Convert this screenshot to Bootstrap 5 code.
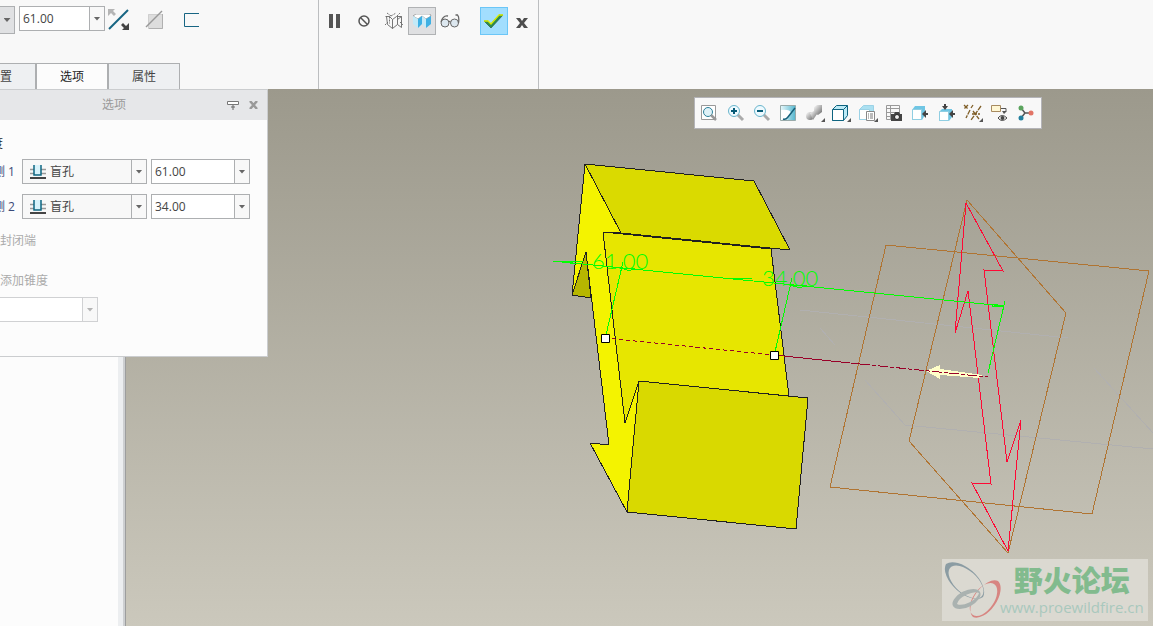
<!DOCTYPE html>
<html lang="zh-CN">
<head>
<meta charset="utf-8">
<meta name="viewport" content="width=device-width, initial-scale=1">
<title>拉伸 - 选项</title>
<link rel="stylesheet" href="https://cdn.jsdelivr.net/npm/bootstrap@5.3.0/dist/css/bootstrap.min.css">
<style>
  :root { --edge: #adafb1; --ink: #444; }
  body { font-family: "Open Sans", "Noto Sans CJK SC", sans-serif; font-size: 12px; line-height: 16px; color: var(--ink); background: #f8f8f8; }
  button, select, input { font: inherit; color: inherit; }
  svg { display: block; }

  /* ribbon */
  .ribbon { height: 89px; }
  .ribbon-part { border-right: 1px solid #bcbec0; }
  .part-feature { width: 319px; }
  .part-confirm { width: 220px; padding: 7px 1px; }
  .feature-tools { padding-top: 6px; }
  .split-end { width: 15px; height: 28px; border: 1px solid var(--edge); border-left: 0; background: #e0e1e3; }
  .tool { width: 28px; height: 28px; border: 1px solid transparent; background: none; padding: 0; display: flex; align-items: center; justify-content: center; }
  .tool-on { background: #dfe0e2; border-color: #b0b2b4; }
  .tool-ok { background: #a2defe; border-color: #6bc6f7; }
  .ribbon-tabs { margin-left: -36px; }
  .ribbon-tab { width: 72px; height: 26px; border: 1px solid var(--edge); border-bottom: 0; background: #eef0f2; padding: 0; }
  .ribbon-tab.active { background: #fcfcfc; color: #222; }

  /* value boxes */
  .combo { height: 25px; border: 1px solid var(--edge); background: #fff; }
  .combo input { border: 0; background: none; padding: 0 3px; min-width: 0; outline: 0; }
  .combo button { width: 15px; border: 0; border-left: 1px solid var(--edge); background: #f8f8f8; padding: 0; flex: none; }
  .combo-bar { width: 86px; }
  .combo-panel { width: 99px; }
  .caret { display: block; margin: auto; width: 7px; height: 4px; background: #666; clip-path: polygon(0 0, 100% 0, 50% 100%); }
  .combo.is-off { border-color: #d0d1d3; width: 119px; }
  .combo.is-off button { border-color: #d0d1d3; }
  .combo.is-off .caret { background: #b4b4b4; }

  /* options panel */
  .options-panel { left: -40px; top: 0; width: 308px; height: 268px; background: #fcfcfc; border: 1px solid #cbcdcf; z-index: 2; }
  .options-head { height: 30px; background: #e6e7e9; color: #9a9a9a; }
  .options-tools { right: 7px; top: 8px; gap: 6px; }
  .options-tools button { border: 0; background: none; padding: 0; width: 14px; height: 14px; display: flex; align-items: center; justify-content: center; }
  .options-body { padding: 16px 17px 0 18px; }
  .side-row { margin-top: 7px; margin-bottom: 10px; }
  .side-label { width: 43px; padding-left: 14px; flex: none; color: #3a4a78; }
  .depth-select { position: relative; width: 125px; height: 25px; }
  .depth-select select { width: 100%; height: 100%; appearance: none; border: 1px solid var(--edge); border-radius: 0; background: #f8f8f8; padding: 0 16px 0 27px; outline: 0; }
  .depth-select svg { position: absolute; left: 7px; top: 6px; pointer-events: none; }
  .depth-select .drop-mark { position: absolute; right: 1px; top: 1px; bottom: 1px; width: 15px; border-left: 1px solid var(--edge); display: flex; align-items: center; pointer-events: none; }
  .off-check { gap: 8px; color: #ababab; padding-left: 1px; }
  .off-check input { margin: 0; width: 12px; height: 12px; }

  /* model tree and view */
  .tree { width: 126px; background: #fcfcfc; border-right: 1px solid #9d9e9e; box-shadow: inset -2px 0 #cdcfd1, inset -7px 0 #eceef0; }
  .view { background: linear-gradient(#9c998c, #cbc8bc); }
  .view-bar { top: 8px; right: 111px; width: 348px; height: 32px; background: #f8f8f8; border: 1px solid #b4b4b8; padding: 0 2px 1px 1px; }
  .view-bar button { flex: 1 1 0; border: 0; background: none; padding: 0; display: flex; align-items: center; justify-content: center; }
  .dim-value { font-family: Lato, sans-serif; font-weight: 300; font-size: 22px; fill: #0f0; }
  .site-mark { right: 5px; bottom: 5px; width: 206px; height: 62px; background: #dbd9d1; text-decoration: none; }
  .mark-words { left: 58px; top: 2px; text-align: center; }
  .mark-name { font-family: "Noto Sans CJK SC", sans-serif; font-weight: 900; font-size: 29px; line-height: 36px; color: #82bb8e; }
  .mark-url { font-family: "Open Sans", sans-serif; font-size: 15px; line-height: 20px; color: #a9c8bd; }
</style>
</head>
<body class="d-flex flex-column vh-100 overflow-hidden">

<header class="ribbon d-flex flex-shrink-0">
  <section class="ribbon-part part-feature d-flex flex-column justify-content-between flex-shrink-0">
    <div class="feature-tools d-flex align-items-start">
      <button class="split-end p-0 me-1" type="button" aria-label="深度类型"><span class="caret"></span></button>
      <div class="combo combo-bar d-flex">
        <input class="flex-fill" type="text" value="61.00" aria-label="深度">
        <button type="button" aria-label="深度列表"><span class="caret"></span></button>
      </div>
      <div class="d-flex gap-2">
        <button class="tool" type="button" aria-label="反向">
          <svg width="22" height="22"><path d="M1 20L20 1" stroke="#176583" stroke-width="2"/><path d="M0 0h7l-2 2 3 3-2 2-3-3-3 3z" fill="#b5b5b5"/><path d="M21 21h-7l2-2-3-3 2-2 3 3 3-3z" fill="#444"/></svg>
        </button>
        <button class="tool" type="button" aria-label="移除材料" disabled>
          <svg width="20" height="20"><path d="M3.500 4.500h14v14h-14z" fill="#ddd" stroke="#b5b5b5" stroke-dasharray="1 1"/><path d="M17.500 4v14.500H4" fill="none" stroke="#b0b0b0"/><path d="M1 17L17 1" stroke="#999" stroke-width="1.500"/></svg>
        </button>
        <button class="tool" type="button" aria-label="加厚">
          <svg width="16" height="16"><path d="M16 1.500H1.500v13H16" fill="none" stroke="#176583"/></svg>
        </button>
      </div>
    </div>
    <nav class="ribbon-tabs d-flex" aria-label="操控板">
      <button class="ribbon-tab" type="button">放置</button>
      <button class="ribbon-tab active" type="button">选项</button>
      <button class="ribbon-tab" type="button">属性</button>
    </nav>
  </section>

  <section class="ribbon-part part-confirm d-flex align-items-start flex-shrink-0">
    <button class="tool" type="button" aria-label="暂停"><svg width="12" height="14"><path d="M1 0h4v14H1zM8 0h4v14H8z" fill="#555"/></svg></button>
    <button class="tool" type="button" aria-label="无预览"><svg class="ms-1" width="12" height="12"><circle cx="6" cy="6" r="5" fill="none" stroke="#555" stroke-width="1.500"/><path d="M2.500 2.500l7 7" stroke="#555" stroke-width="1.500"/></svg></button>
    <button class="tool ms-1" type="button" aria-label="分离预览">
      <svg width="20" height="18" fill="none" stroke="#666" stroke-width=".9"><path d="M1.500 4.500h4l3 3v9l-5-4-1-8M8.500 7.500l4-3h5M8.500 16.500l5-4v-8M13.500 7.500l4-3v11l-4-3"/><path d="M3 1l4 3M7 4l5-3M13 4l3-3M1 13l3-3M16 10l3 3M5.500 4.500v7" stroke-dasharray="2 1"/></svg>
    </button>
    <button class="tool tool-on" type="button" aria-label="连接预览">
      <svg width="20" height="14"><path d="M1 2l3-2h14l1 2-5 3-4-3-4 3z" fill="#fff" stroke="#777" stroke-width=".6"/><path d="M1 2l5 3v9l-5-4zM10 2l4 3v9l-4-4z" fill="#c3eaf8"/><path d="M6 5l4-3v8l-4 4zM14 5l5-3v8l-5 4z" fill="#3fb0e3"/></svg>
    </button>
    <button class="tool" type="button" aria-label="校验">
      <svg width="20" height="14" fill="#dce7ef" stroke="#666"><circle cx="5" cy="9" r="4"/><circle cx="14.500" cy="9" r="4"/><path d="M9 8q1-1 1 0M1 8Q3 1 8 2M18.500 9q1-6-1-8h-2" fill="none" stroke-width="1.300"/></svg>
    </button>
    <button class="tool tool-ok ms-3" type="button" aria-label="确定">
      <svg width="20" height="15"><path d="M0 7h4l3 3L15 1h4L7 14z" fill="#2d8b50" stroke="#285f42" stroke-width=".7"/><path d="M0 7h4l3 3 8-9h4" fill="none" stroke="#d9ee00" stroke-width="1.300"/></svg>
    </button>
    <button class="tool" type="button" aria-label="取消"><svg class="mt-1" width="12" height="10"><path d="M0 0h4l2 3 2-3h4L8 5l4 5H8L6 7l-2 3H0l4-5z" fill="#4e4e4e"/></svg></button>
  </section>
</header>

<main class="d-flex flex-fill position-relative" style="min-height:0">
  <section class="options-panel position-absolute" aria-label="选项">
    <div class="options-head d-flex align-items-center justify-content-center position-relative">
      <span>选项</span>
      <div class="options-tools d-flex position-absolute">
        <button type="button" aria-label="固定"><svg width="12" height="9"><path d="M.5.500h11v3H.5z" fill="#fff" stroke="#777"/><path d="M6 4v5M4 6h4" stroke="#666"/></svg></button>
        <button type="button" aria-label="关闭"><svg width="9" height="8"><path d="M1 0l7 8M8 0L1 8" stroke="#999" stroke-width="2.500"/></svg></button>
      </div>
    </div>
    <div class="options-body">
      <div class="text-dark">深度</div>
      <div class="side-row d-flex align-items-center">
        <label class="side-label" for="side1">侧 1</label>
        <div class="depth-select me-1">
          <select id="side1"><option>盲孔</option></select>
          <svg width="18" height="16"><path d="M1 4.500h4M1 8.500h4M12 4.500h5M12 8.500h5" stroke="#999" stroke-width="1.500"/><path d="M5 0v10h7V0" fill="#d8f3fb" stroke="#0d6681" stroke-width="1.500"/><path d="M1 13h16" stroke="#444" stroke-width="2"/></svg>
          <span class="drop-mark"><span class="caret"></span></span>
        </div>
        <div class="combo combo-panel d-flex">
          <input class="flex-fill" type="text" value="61.00" aria-label="侧 1 深度"><button type="button" aria-label="侧 1 列表"><span class="caret"></span></button>
        </div>
      </div>
      <div class="side-row d-flex align-items-center">
        <label class="side-label" for="side2">侧 2</label>
        <div class="depth-select me-1">
          <select id="side2"><option>盲孔</option></select>
          <svg width="18" height="16"><path d="M1 4.500h4M1 8.500h4M12 4.500h5M12 8.500h5" stroke="#999" stroke-width="1.500"/><path d="M5 0v10h7V0" fill="#d8f3fb" stroke="#0d6681" stroke-width="1.500"/><path d="M1 13h16" stroke="#444" stroke-width="2"/></svg>
          <span class="drop-mark"><span class="caret"></span></span>
        </div>
        <div class="combo combo-panel d-flex">
          <input class="flex-fill" type="text" value="34.00" aria-label="侧 2 深度"><button type="button" aria-label="侧 2 列表"><span class="caret"></span></button>
        </div>
      </div>
      <label class="off-check d-flex align-items-center pt-1"><input type="checkbox" disabled>封闭端</label>
      <label class="off-check d-flex align-items-center mt-4"><input type="checkbox" disabled>添加锥度</label>
      <div class="combo is-off d-flex mt-2">
        <input class="flex-fill" type="text" aria-label="锥度" disabled><button type="button" aria-label="锥度列表" disabled><span class="caret"></span></button>
      </div>
    </div>
  </section>

  <aside class="tree flex-shrink-0" aria-label="模型树"></aside>

  <section class="view flex-fill position-relative overflow-hidden">
    <svg class="w-100 h-100" viewBox="126 89 1027 537" role="img" aria-label="拉伸模型">
      <g shape-rendering="crispEdges" fill="none">
        <path d="M800 310L1068 338M905 425L1153 449M865 380L905 425M1094 368L1153 433M820 328L835 345" stroke="#b1b0b0"/>
        <g stroke="#202020" stroke-linejoin="round">
          <path d="M585 164L754 181 790 250 621 233z" fill="#dada00"/>
          <path d="M586 252L572 295 591 298z" fill="#b6b600"/>
          <path d="M603 232L771 249 789 396 639 381 625 423z" fill="#e7e600"/>
          <path d="M585 164L621 233 603 232 625 423 639 381 627 512 590 443 609 445 586 252 572 295z" fill="#f4f300"/>
          <path d="M639 381L808 398 796 529 627 512z" fill="#d9d900"/>
          <path d="M603 232L790 250"/>
        </g>
        <path d="M886 245L1149 271 1092 514 830 487zM967 200L1066 313 1008 553 909 441z" stroke="#b07432"/>
        <path d="M966 203L1003 271 984 270 1007 462 1021 420 1008 551 972 483 991 484 968 291 955 333z" stroke="#ff0834"/>
        <path d="M926 371L940 365V369L983 375 979 378 940 375V379z" fill="#ffffc8"/>
        <path d="M605 338L774 355" stroke="#990028" stroke-dasharray="4 3"/>
        <path d="M774 355L860 364" stroke="#990028"/>
        <path d="M860 364L988 377" stroke="#990028" stroke-dasharray="10 2 4 2"/>
        <path d="M553 261L1004 306M553 261H583M555 261L577 264M623 262L606 335M622 268H635L629 271zM731 278H752L731 279M792 278L775 352M790 285H807L800 288zM1005 301L988 373M992 304L1003 306 992 307z" stroke="#0f0"/>
      </g>
      <g fill="#fff" stroke="#000"><path d="M601.500 334.500h8v8h-8zM770.500 351.500h8v8h-8z"/></g>
      <text class="dim-value" x="592" y="269">61.00</text>
      <text class="dim-value" x="762" y="286">34.00</text>
    </svg>

    <div class="view-bar d-flex position-absolute" role="toolbar" aria-label="视图">
      <button type="button" aria-label="重新调整"><svg width="18" height="18"><path d="M1.500 1.500h14v14h-14z" fill="#fff" stroke="#999"/><circle cx="8" cy="8" r="4.500" fill="#dff2f8" stroke="#2b8099"/><path d="M11 11l5 5" stroke="#999" stroke-width="2.500"/></svg></button>
      <button type="button" aria-label="放大"><svg width="18" height="18"><path d="M10 10l6 6" stroke="#aaa" stroke-width="3"/><circle cx="7" cy="7" r="5.500" fill="#eefaff" stroke="#69b5cc"/><path d="M4 7h6M7 4v6" stroke="#075b77" stroke-width="2"/></svg></button>
      <button type="button" aria-label="缩小"><svg width="18" height="18"><path d="M10 10l6 6" stroke="#aaa" stroke-width="3"/><circle cx="7" cy="7" r="5.500" fill="#eefaff" stroke="#69b5cc"/><path d="M4 7h6" stroke="#075b77" stroke-width="2"/></svg></button>
      <button type="button" aria-label="重画"><svg width="18" height="18"><defs><linearGradient id="repaint"><stop stop-color="#e8f8fb"/><stop offset="1" stop-color="#55b7cf"/></linearGradient></defs><path d="M1.500 1.500h15v15h-15z" fill="url(#repaint)" stroke="#9aa"/><path d="M2 6Q11 5 12 9L8 16H2z" fill="#fff"/><path d="M4 15q3 1 5-2l7-9" fill="none" stroke="#14607a" stroke-width="1.500"/></svg></button>
      <button type="button" aria-label="显示样式"><svg width="20" height="18"><defs><linearGradient id="shade" x2="1" y2="1"><stop stop-color="#fff"/><stop offset="1" stop-color="#666"/></linearGradient></defs><path d="M9 3l3-2h5v7l-4 3-4-2z" fill="url(#shade)"/><circle cx="5" cy="12" r="4" fill="url(#shade)"/><path d="M5 9l4-2 3 3-4 6z" fill="url(#shade)"/><path d="M20 14v4h-4z" fill="#555"/></svg></button>
      <button type="button" aria-label="已保存方向"><svg width="20" height="18"><path d="M1.500 5.500l4-4h11v10l-4 5h-11z" fill="#bceaf6" stroke="#0e6480"/><path d="M1.500 5.500h11v11h-11z" fill="#fff" stroke="#0e6480"/><path d="M12.500 5.500l4-4" stroke="#0e6480"/><path d="M20 14v4h-4z" fill="#555"/></svg></button>
      <button type="button" aria-label="视图管理器"><svg width="20" height="18"><path d="M1.500 5.500l4-4h10v11l-3 3h-11z" fill="#abe0f1" stroke="#9bd2e6"/><path d="M1.500 5.500h10v10h-10z" fill="#fff" stroke="#9bd2e6"/><path d="M8.500 7.500h8v9h-8z" fill="#fff" stroke="#888"/><path d="M10 10h1m1 0h3m-5 2h1m1 0h3m-5 2h1m1 0h3" stroke="#777"/><path d="M20 14v4h-4z" fill="#555"/></svg></button>
      <button type="button" aria-label="图像"><svg width="18" height="18"><path d="M1.500 1.500h13v14h-13zM1 4.500h13M1 8.500h13M1 12.500h13M5.500 1v14" fill="none" stroke="#999"/><path d="M6 10h3l1-2h4l1 2h2v7H6z" fill="#444"/><circle cx="12" cy="13" r="2.500" fill="#eee" stroke="#222"/></svg></button>
      <button type="button" aria-label="截面"><svg width="18" height="18"><path d="M1 6l3-4h10v9l-3 5H1z" fill="#70c6e4"/><path d="M1.500 5.500h9v10h-9z" fill="#fff" stroke="#90cee2"/><path d="M17 10h-4" stroke="#444" stroke-width="2"/><path d="M11 10l4-4v8z" fill="#444"/></svg></button>
      <button type="button" aria-label="剖面"><svg width="18" height="18"><path d="M1 8l3-3h10v8l-3 4H1z" fill="#70c6e4"/><path d="M1.500 7.500h9v9h-9z" fill="#fff" stroke="#90cee2"/><path d="M17 10h-4M7 0v3" stroke="#444" stroke-width="2"/><path d="M11 10l4-4v8zM4 2h6L7 6z" fill="#444"/></svg></button>
      <button type="button" aria-label="基准显示"><svg width="20" height="18"><path d="M1 1l4 4M5 1L1 5M10 1L8 4M7 6l-4 8M18 2L8 16M9 10h8M10 7l6 8" fill="none" stroke="#805f28" stroke-width="1.300" stroke-dasharray="5 1"/><path d="M20 14v4h-4z" fill="#555"/></svg></button>
      <button type="button" aria-label="注释显示"><svg width="18" height="18"><path d="M1.500 1.500h9v6h-9z" fill="#fff7d4" stroke="#a88b60"/><path d="M11 4.500h5V7" fill="none" stroke="#555"/><path d="M12 7h5l-3 3z" fill="#555"/><path d="M8 14q4-5 9 0-5 5-9 0z" fill="#fff" stroke="#444"/><circle cx="12.500" cy="14" r="2" fill="#444"/></svg></button>
      <button type="button" aria-label="旋转中心"><svg width="18" height="18"><path d="M4 4l4 5-4 5M8 9h6" fill="none" stroke="#555" stroke-width="1.500"/><circle cx="4" cy="4" r="2.500" fill="#5ba45e"/><circle cx="4" cy="14" r="2.500" fill="#237f9e"/><circle cx="14" cy="9" r="2.500" fill="#e27466"/></svg></button>
    </div>

    <a class="site-mark position-absolute" href="http://www.proewildfire.cn">
      <svg width="62" height="62" fill-rule="evenodd">
        <path d="M4 5A25 14 42 0 1 41 38A25 14 42 0 1 4 5zM8 9A21 11 42 0 1 40 37A21 11 42 0 1 8 9z" fill="#8b9ca3"/>
        <path d="M56 22A22 12 125 0 1 31 58A22 12 125 0 1 56 22zM52 25A18 10 125 0 1 31 56A18 10 125 0 1 52 25z" fill="#d78581"/>
        <path d="M11 47A15 8 -27 0 1 38 33A15 8 -27 0 1 11 47zM15 45A13 6 -27 0 1 37 34A13 6 -27 0 1 15 45z" fill="#aab2b0"/>
      </svg>
      <span class="mark-words position-absolute d-flex flex-column"><span class="mark-name">野火论坛</span><span class="mark-url">www.proewildfire.cn</span></span>
    </a>
  </section>
</main>

<script src="https://cdn.jsdelivr.net/npm/bootstrap@5.3.0/dist/js/bootstrap.bundle.min.js"></script>
</body>
</html>
